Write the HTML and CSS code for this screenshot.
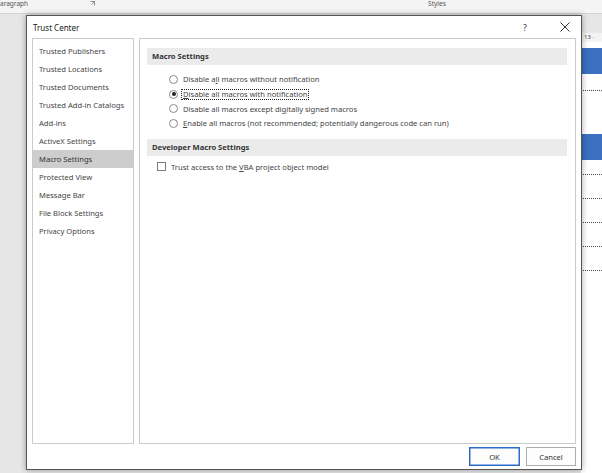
FILE: index.html
```html
<!DOCTYPE html>
<html>
<head>
<meta charset="utf-8">
<link rel="stylesheet" href="styles.css">
</head>
<body>
<div class="screen">
  <div class="ribbon">
    <span class="rb-para">aragraph</span>
    <svg class="rb-launch" width="5" height="5" viewBox="0 0 5 5"><path d="M0.5 0.5H4.5V4.5M1.5 3.5L4.5 0.5" fill="none" stroke="#777" stroke-width="0.8"/></svg>
    <span class="rb-styles">Styles</span>
  </div>
  <div class="workspace">
    <div class="spacer"></div>
    <div class="doc">
      <div class="doc-top"></div>
      <div class="ruler">13 ·</div>
      <div class="page">
        <div class="blue b1"></div>
        <div class="dots d1"></div>
        <div class="blue b2"></div>
        <div class="dots d2"></div>
        <div class="dots d3"></div>
        <div class="dots d3"></div>
        <div class="dots d3"></div>
        <div class="dots d3"></div>
      </div>
    </div>
  </div>

  <div class="dialog">
    <div class="titlebar">
      <span class="title">Trust Center</span>
      <span class="help">?</span>
      <svg class="close" width="10" height="10" viewBox="0 0 10 10"><path d="M0.5 0.5L9.5 9.5M9.5 0.5L0.5 9.5" stroke="#333" stroke-width="1"/></svg>
    </div>
    <div class="body">
      <ul class="nav">
        <li>Trusted Publishers</li>
        <li>Trusted Locations</li>
        <li>Trusted Documents</li>
        <li>Trusted Add-in Catalogs</li>
        <li>Add-ins</li>
        <li>ActiveX Settings</li>
        <li class="sel">Macro Settings</li>
        <li>Protected View</li>
        <li>Message Bar</li>
        <li>File Block Settings</li>
        <li>Privacy Options</li>
      </ul>
      <div class="panel">
        <div class="section-head">Macro Settings</div>
        <div class="radios">
          <div class="opt"><span class="radio"></span><span class="lbl">Disable a<u>l</u>l macros without notification</span></div>
          <div class="opt"><span class="radio on"></span><span class="lbl focus"><u>D</u>isable all macros with notification</span></div>
          <div class="opt"><span class="radio"></span><span class="lbl">Disable all macros except di<u>g</u>itally signed macros</span></div>
          <div class="opt"><span class="radio"></span><span class="lbl"><u>E</u>nable all macros (not recommended; potentially dangerous code can run)</span></div>
        </div>
        <div class="section-head">Developer Macro Settings</div>
        <div class="check-row"><span class="check"></span><span class="lbl">Trust access to the <u>V</u>BA project object model</span></div>
      </div>
    </div>
    <div class="footer">
      <button class="btn ok">OK</button>
      <button class="btn cancel">Cancel</button>
    </div>
  </div>
</div>
</body>
</html>
```
FILE: styles.css
```css
* { box-sizing: border-box; }
html, body { margin: 0; padding: 0; }
body {
  width: 602px;
  height: 473px;
  overflow: hidden;
  font-family: "Noto Sans", "Open Sans", sans-serif;
  color: #333;
}
.screen {
  position: relative;
  width: 602px;
  height: 473px;
  background: #e6e6e6;
  display: flex;
  flex-direction: column;
}
.ribbon {
  height: 14px;
  background: #f4f4f4;
  border-bottom: 1px solid #d4d4d4;
  display: flex;
  align-items: flex-start;
  font-size: 6.5px;
  color: #555;
  line-height: 8px;
  overflow: hidden;
}
.rb-para { margin-left: 0; margin-top: 0; }
.rb-launch { margin-left: 62px; margin-top: 1px; }
.rb-styles { margin-left: 333px; margin-top: 0; }
.workspace {
  flex: 1;
  display: flex;
}
.spacer { flex: 1; }
.doc {
  width: 21px;
  display: flex;
  flex-direction: column;
}
.doc-top { height: 19px; }
.ruler {
  height: 9px;
  background: #f3f3f3;
  font-size: 6px;
  line-height: 9px;
  padding-left: 3px;
  color: #444;
}
.page {
  flex: 1;
  background: #fff;
  padding-top: 6px;
  display: flex;
  flex-direction: column;
}
.blue { height: 26px; background: #3b6fbf; }
.b2 { margin-top: 43px; }
.dots { height: 1px; border-top: 1px dotted #444; }
.d1 { margin-top: 16px; }
.d2 { margin-top: 14px; }
.d3 { margin-top: 23px; }

.dialog {
  position: absolute;
  left: 26px;
  top: 15px;
  width: 556px;
  height: 455px;
  background: #fff;
  border: 1px solid #555;
  box-shadow: 0 0 6px rgba(0,0,0,0.35);
  display: flex;
  flex-direction: column;
  font-size: 7.6px;
  color: #444;
}
.titlebar {
  height: 22px;
  display: flex;
  align-items: center;
  padding: 0 11px 0 6px;
}
.title { flex: 1; color: #222; font-size: 8px; }
.help { color: #444; font-size: 9px; margin-right: 33px; }
.close { display: block; }

.body {
  flex: 1;
  display: flex;
  gap: 5px;
  padding: 0 5px;
}
.nav {
  list-style: none;
  margin: 0;
  padding: 3px 0 0;
  width: 102px;
  border: 1px solid #cbcbcb;
}
.nav li {
  height: 18px;
  line-height: 18px;
  padding-left: 6px;
  white-space: nowrap;
}
.nav li.sel { background: #cdcdcd; color: #333; }
.panel {
  flex: 1;
  border: 1px solid #cbcbcb;
  padding: 9px 8px 0 7px;
}
.section-head {
  height: 17px;
  line-height: 17px;
  background: #ebebeb;
  font-weight: bold;
  padding-left: 5px;
  color: #333;
}
.radios {
  padding: 7px 0 8px 22px;
}
.opt {
  height: 14.7px;
  display: flex;
  align-items: center;
}
.radio {
  width: 9px;
  height: 9px;
  border: 1px solid #8a8a8a;
  border-radius: 50%;
  margin-right: 4px;
  display: flex;
  align-items: center;
  justify-content: center;
  flex: none;
}
.radio.on::after {
  content: "";
  width: 4px;
  height: 4px;
  border-radius: 50%;
  background: #222;
}
.lbl { white-space: nowrap; padding: 0 1px; }
.lbl.focus { border: 1px dotted #222; line-height: 9px; margin-left: -1px; }
.check-row {
  height: 18px;
  margin-top: 2px;
  display: flex;
  align-items: center;
  padding-left: 10px;
}
.check {
  width: 9px;
  height: 9px;
  border: 1px solid #7a7a7a;
  margin-right: 4px;
  flex: none;
}
.footer {
  height: 25px;
  display: flex;
  justify-content: flex-end;
  align-items: flex-start;
  padding: 3px 5px 0;
  gap: 6px;
}
.btn {
  height: 19px;
  font-family: inherit;
  font-size: 7.6px;
  color: #333;
  background: #fdfdfd;
  border: 1px solid #adadad;
  padding: 0;
  margin: 0;
}
.btn.ok { width: 51px; border: 1px solid #2b6dc7; box-shadow: inset 0 0 0 0.5px #2b6dc7; }
.btn.cancel { width: 50px; }
```
